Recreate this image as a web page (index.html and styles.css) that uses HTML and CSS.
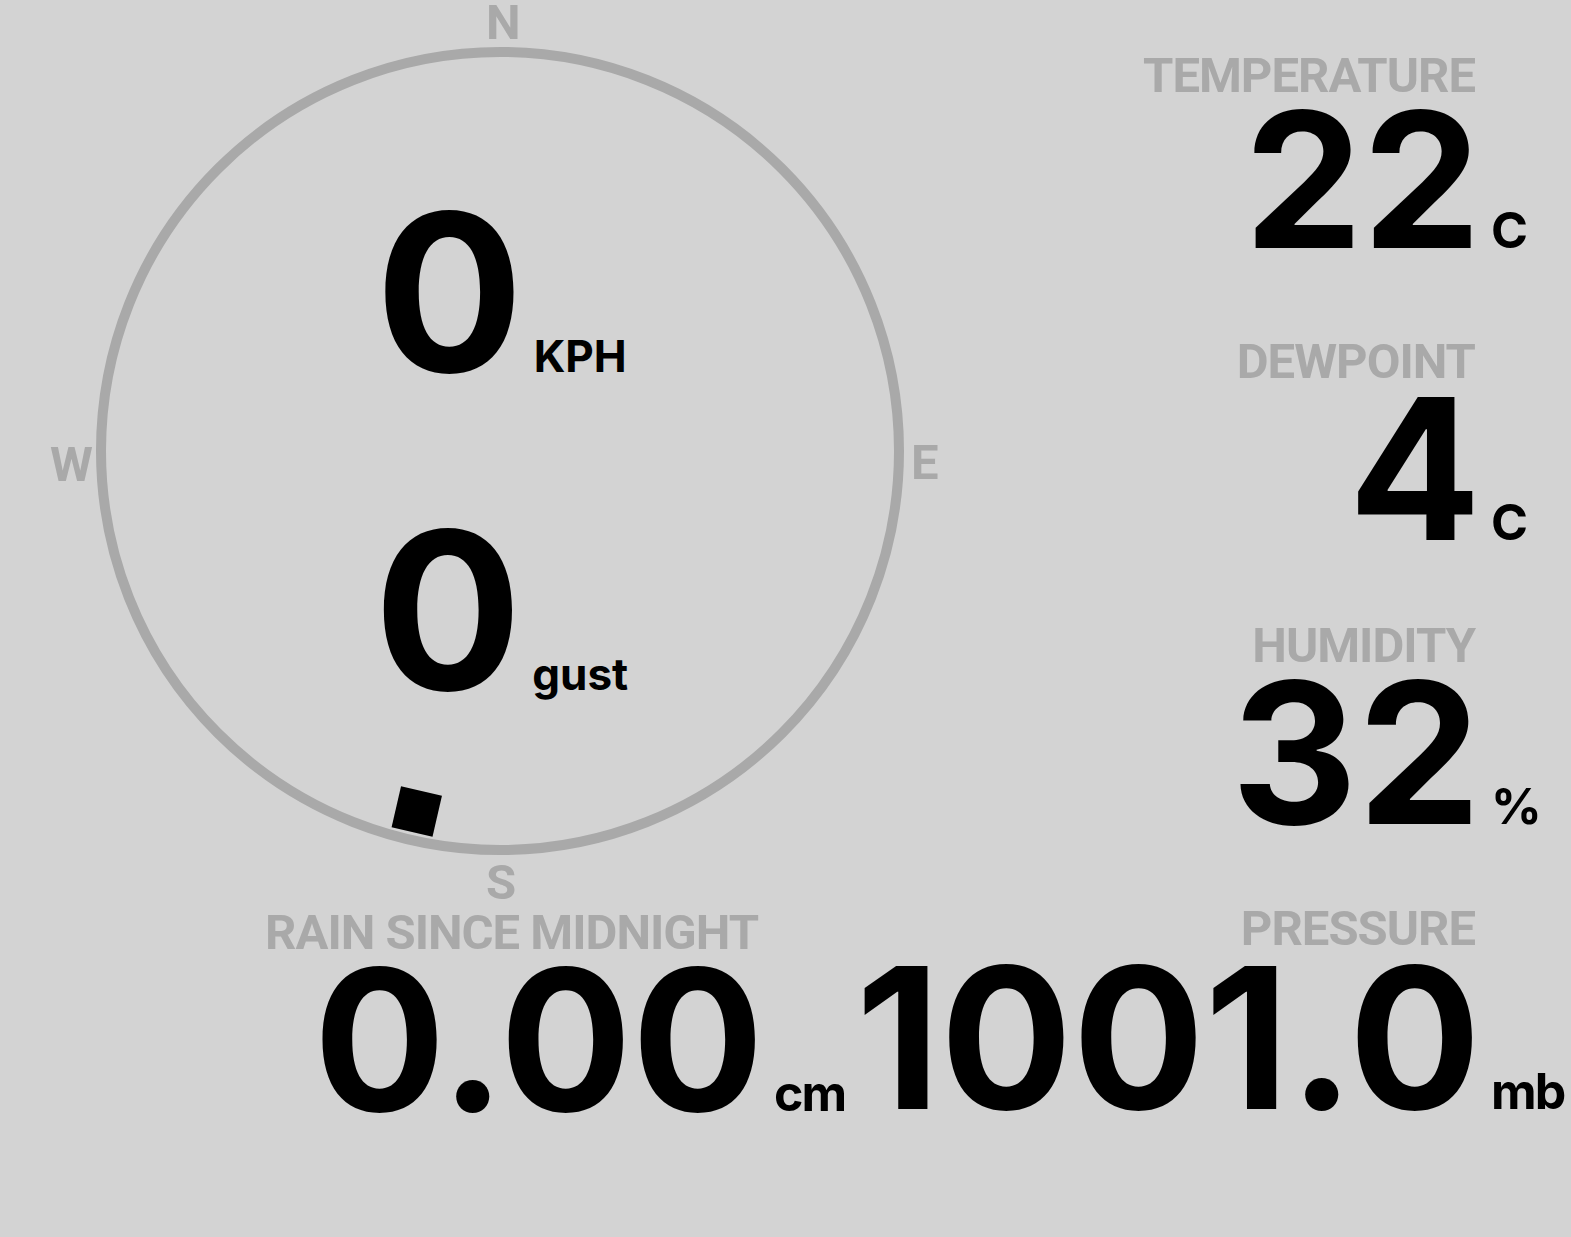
FILE: index.html
```html
<!DOCTYPE html>
<html lang="en">
<head>
  <meta charset="UTF-8">
  <meta name="viewport" content="width=device-width, initial-scale=1.0">
  <title>Weather Station</title>
  <link rel="stylesheet" href="styles.css">
</head>
<body>
  <div class="dash">
    <div class="top">
      <div class="compass">
        <svg class="dial" width="1000" height="904" viewBox="0 0 1000 904">
          <circle cx="500" cy="451" r="399" fill="none" stroke="#a9a9a9" stroke-width="10"/>
          <g transform="rotate(193 500 451)">
            <rect x="479" y="60" width="42" height="42" fill="#000"/>
          </g>
        </svg>
        <span class="point point-n">N</span>
        <span class="point point-e">E</span>
        <span class="point point-s">S</span>
        <span class="point point-w">W</span>
        <div class="speeds">
          <div class="speed"><span class="speed-value">0</span><span class="speed-unit">KPH</span></div>
          <div class="speed"><span class="speed-value">0</span><span class="speed-unit">gust</span></div>
        </div>
      </div>
      <div class="readings">
        <div class="stat stat-temp">
          <div class="label">TEMPERATURE</div>
          <div class="value">22</div>
          <div class="unit">C</div>
        </div>
        <div class="stat">
          <div class="label">DEWPOINT</div>
          <div class="value">4</div>
          <div class="unit">C</div>
        </div>
        <div class="stat">
          <div class="label">HUMIDITY</div>
          <div class="value">32</div>
          <div class="unit">%</div>
        </div>
      </div>
    </div>
    <div class="bottom">
      <div class="cell cell-rain">
        <div class="stat">
          <div class="label">RAIN SINCE MIDNIGHT</div>
          <div class="value">0.00</div>
          <div class="unit">cm</div>
        </div>
      </div>
      <div class="cell cell-pressure">
        <div class="stat">
          <div class="label">PRESSURE</div>
          <div class="value">1001.0</div>
          <div class="unit">mb</div>
        </div>
      </div>
    </div>
  </div>
</body>
</html>
```

FILE: styles.css
```css
body {
  margin: 0;
  background-color: #d3d3d3;
  font-family: Inter, "Noto Sans", sans-serif;
  font-weight: 700;
  color: #000;
}
.dash {
  width: 1571px;
  height: 1237px;
  overflow: hidden;
}
.top {
  display: flex;
  height: 904px;
}
.compass {
  position: relative;
  width: 1000px;
  height: 904px;
  flex: none;
}
.dial {
  position: absolute;
  left: 0;
  top: 0;
}
.point {
  position: absolute;
  font-family: Roboto, sans-serif;
  font-size: 49px;
  line-height: 0.8;
  color: #a9a9a9;
}
.point-n { left: 486px; top: 3px; }
.point-s { left: 486px; top: 863px; }
.point-w { left: 50px; top: 445px; }
.point-e { left: 911px; top: 443px; }
.speeds {
  position: relative;
  display: flex;
  flex-direction: column;
  align-items: center;
  gap: 98px;
  padding-top: 182px;
  padding-left: 2px;
}
.speed {
  display: flex;
  align-items: baseline;
}
.speed-value {
  font-size: 220px;
  line-height: 1;
}
.speed-unit {
  font-size: 44px;
  margin-left: 10px;
}
.readings {
  flex: 1;
  display: flex;
  flex-direction: column;
  align-items: flex-end;
  gap: 69px;
  padding: 51px 6px 0 0;
}

/* label over value, unit hangs in its own column */
.stat {
  display: grid;
  grid-template-columns: auto 90px;
  align-items: baseline;
}
.label {
  grid-column: 1;
  text-align: right;
  font-family: Roboto, sans-serif;
  font-size: 49px;
  line-height: 1;
  letter-spacing: -1px;
  color: #a9a9a9;
}
.value {
  grid-column: 1;
  text-align: right;
  font-size: 196px;
  line-height: 0.85;
  white-space: nowrap;
  margin-right: -6px;
}
.stat-temp .value {
  font-size: 188px;
  margin-bottom: 8px;
}
.unit {
  grid-column: 2;
  padding-left: 16px;
  font-size: 50px;
  line-height: 1;
  letter-spacing: -2px;
  white-space: nowrap;
}
.bottom {
  display: flex;
}
.cell {
  display: flex;
  justify-content: flex-end;
}
.cell-rain {
  width: 848px;
  flex: none;
  padding-top: 4px;
}
.cell-pressure {
  flex: 1;
  padding-right: 6px;
}
```
